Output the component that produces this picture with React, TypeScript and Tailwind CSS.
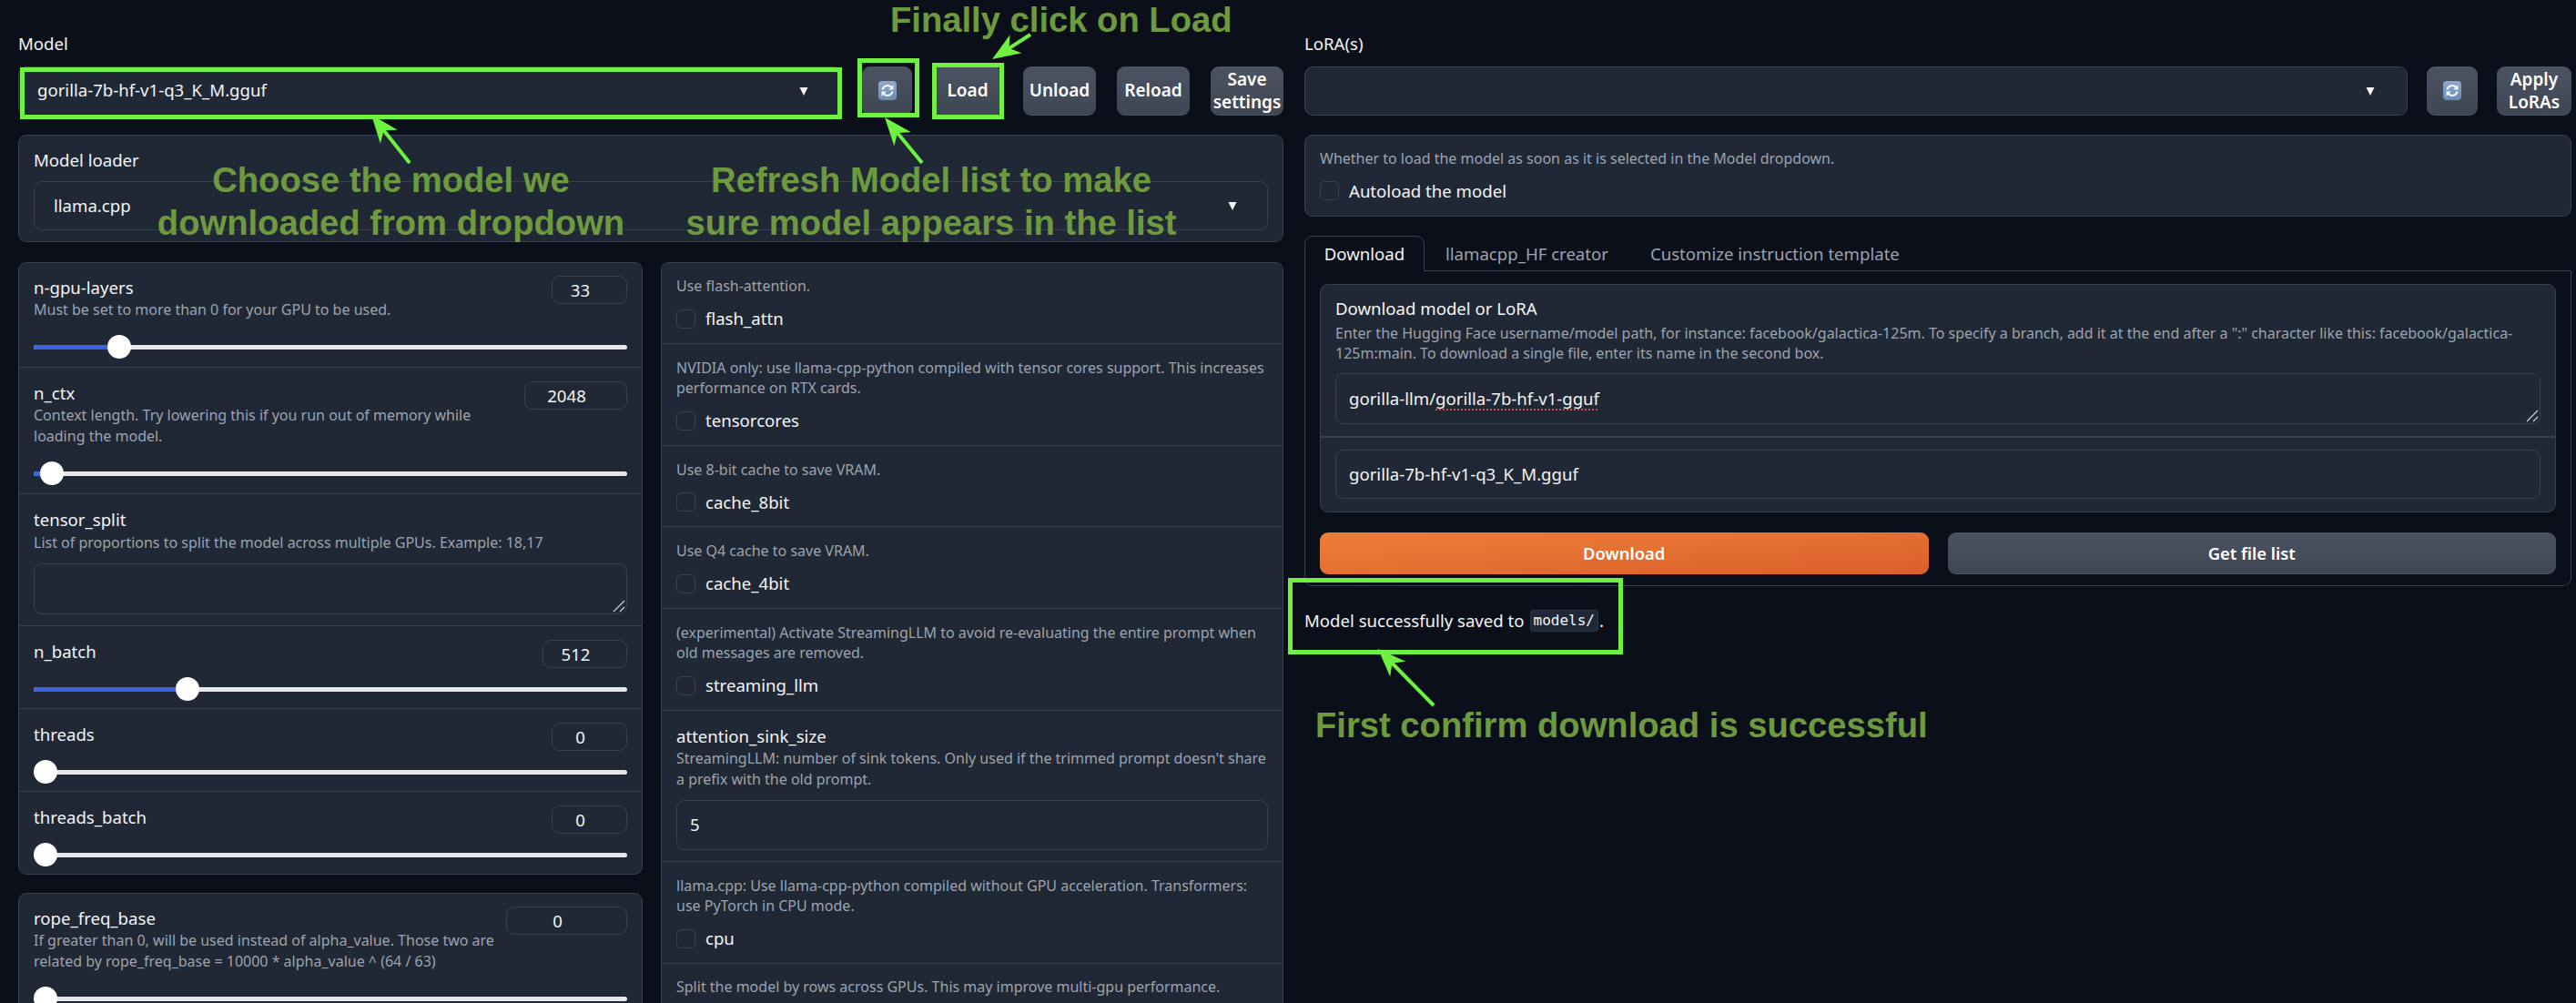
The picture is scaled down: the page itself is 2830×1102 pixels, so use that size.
import React from 'react';

const panel = 'rounded-[9px] border border-[#374151] bg-[#212835]';
const btn =
  'flex h-[54px] shrink-0 items-center justify-center rounded-[9px] border-b border-[#4b5563] bg-gradient-to-b from-[#4b5261] to-[#3f4654] text-center text-[19px] leading-[25px] font-semibold text-white';

const Caret: React.FC = () => (
  <svg width="12" height="12" viewBox="0 0 12 12" className="shrink-0">
    <polygon points="1.5,2 10.5,2 6,11" fill="#f3f4f6" />
  </svg>
);

const RefreshIcon: React.FC = () => (
  <svg width="20" height="21" viewBox="0 0 20 21">
    <defs>
      <linearGradient id="refreshFill" x1="0" y1="0" x2="0" y2="1">
        <stop offset="0" stopColor="#8fa9c9" />
        <stop offset="1" stopColor="#6d8cb3" />
      </linearGradient>
    </defs>
    <rect x="0" y="0" width="20" height="21" rx="4" fill="url(#refreshFill)" />
    <path d="M4.5 9.5 A5.6 5.6 0 0 1 14.2 7" fill="none" stroke="#f4f6f9" strokeWidth="2" />
    <polygon points="16.5,4 16.5,9.5 11.2,9.5" fill="#f4f6f9" />
    <path d="M15.5 11.5 A5.6 5.6 0 0 1 5.8 14" fill="none" stroke="#f4f6f9" strokeWidth="2" />
    <polygon points="3.5,17 3.5,11.5 8.8,11.5" fill="#f4f6f9" />
  </svg>
);

const ResizeHandle: React.FC = () => (
  <svg width="14" height="14" viewBox="0 0 14 14" className="absolute right-[1px] bottom-[1px]">
    <path d="M1 13 L13 1 M8 13 L13 8" stroke="#c9ccd2" strokeWidth="1.3" />
  </svg>
);

const Slider: React.FC<{ left: number; gap: string }> = ({ left, gap }) => (
  <div className={`relative flex h-[26px] items-center ${gap}`}>
    <div className="h-[5px] w-full rounded-full bg-[#e5e7eb]" />
    <div className="absolute left-0 h-[5px] rounded-l-full bg-[#3b63e4]" style={{ width: left + 4 }} />
    <div className="absolute h-[26px] w-[26px] rounded-full bg-white" style={{ left }} />
  </div>
);

interface SliderRowProps {
  title: string;
  info?: string[];
  value: string;
  inputWidth: string;
  left: number;
  first?: boolean;
  last?: boolean;
}

const SliderRow: React.FC<SliderRowProps> = ({ title, info, value, inputWidth, left, first, last }) => (
  <div
    className={`px-[16px] ${first ? 'pt-[14px]' : 'pt-[15px]'} ${info ? 'pb-[9px]' : 'pb-[8px]'} ${
      last ? '' : 'border-b border-[#374151]'
    }`}
  >
    <div className="flex justify-between">
      <div>
        <div className="text-[18.6px] leading-[26px] text-[#f3f4f6]">{title}</div>
        {info?.map((line) => (
          <div key={line} className="text-[16px] leading-[23px] whitespace-nowrap text-[#9ca3af]">
            {line}
          </div>
        ))}
      </div>
      <div
        className={`${inputWidth} flex h-[31px] shrink-0 items-center justify-center rounded-[9px] border border-[#374151] pr-[20px] text-[18.6px] text-[#f3f4f6]`}
      >
        {value}
      </div>
    </div>
    <Slider left={left} gap={info ? 'mt-[16px]' : 'mt-[10px]'} />
  </div>
);

const CheckRow: React.FC<{ info: string[]; label: string; first?: boolean; last?: boolean }> = ({
  info,
  label,
  first,
  last,
}) => (
  <div className={`px-[16px] ${first ? 'pt-[14px]' : 'pt-[15px]'} pb-[16px] ${last ? '' : 'border-b border-[#374151]'}`}>
    {info.map((line) => (
      <div key={line} className="text-[16px] leading-[22.5px] whitespace-nowrap text-[#9ca3af]">
        {line}
      </div>
    ))}
    <div className="mt-[14px] flex h-[21px] items-center gap-[11px]">
      <div className="h-[21px] w-[21px] rounded-[5px] border border-[#374151]" />
      <span className="text-[18.6px] text-[#f3f4f6]">{label}</span>
    </div>
  </div>
);

const Arrow: React.FC<{ x1: number; y1: number; x2: number; y2: number }> = ({ x1, y1, x2, y2 }) => {
  // x1,y1 is the tail, x2,y2 the tip
  const len = Math.hypot(x2 - x1, y2 - y1);
  const ux = (x2 - x1) / len;
  const uy = (y2 - y1) / len;
  const at = (back: number, side: number) => `${x2 - ux * back - uy * side},${y2 - uy * back + ux * side}`;
  return (
    <g fill="#6ff23f" stroke="#6ff23f">
      <line x1={x1} y1={y1} x2={x2 - ux * 20} y2={y2 - uy * 20} strokeWidth="4" />
      <polygon points={`${at(0, 0)} ${at(31, 12)} ${at(22, 0)} ${at(31, -12)}`} strokeWidth="0" />
    </g>
  );
};

const Note: React.FC<{ className: string; children: React.ReactNode }> = ({ className, children }) => (
  <div
    className={`absolute whitespace-nowrap font-['Liberation_Sans',Arial,sans-serif] text-[38.2px] leading-[44px] font-bold text-[#6e9a3f] ${className}`}
  >
    {children}
  </div>
);

const Overlay: React.FC = () => (
  <>
    <div className="absolute top-[74px] left-[22px] h-[57px] w-[903px] border-[5px] border-[#6ff23f]" />
    <div className="absolute top-[64px] left-[942px] h-[65px] w-[68px] border-[5px] border-[#6ff23f]" />
    <div className="absolute top-[69px] left-[1024px] h-[62px] w-[79px] border-[5px] border-[#6ff23f]" />
    <div className="absolute top-[635px] left-[1415px] h-[84px] w-[368px] border-[5px] border-[#6ff23f]" />
    <svg width="2830" height="1102" className="absolute top-0 left-0">
      <Arrow x1={450} y1={179} x2={408} y2={126} />
      <Arrow x1={1013} y1={179} x2={972} y2={129} />
      <Arrow x1={1132} y1={38} x2={1090} y2={65} />
      <Arrow x1={1575} y1={775} x2={1514} y2={713} />
    </svg>
    <Note className="top-[0px] left-[978px]">Finally click on Load</Note>
    <Note className="top-[176px] left-[172px] w-[515px] text-center">Choose the model we</Note>
    <Note className="top-[223px] left-[172px] w-[515px] text-center">downloaded from dropdown</Note>
    <Note className="top-[176px] left-[752px] w-[542px] text-center">Refresh Model list to make</Note>
    <Note className="top-[223px] left-[752px] w-[542px] text-center">sure model appears in the list</Note>
    <Note className="top-[775px] left-[1445px]">First confirm download is successful</Note>
  </>
);

const App: React.FC = () => (
  <div className="relative h-[1102px] w-[2830px] overflow-hidden bg-[#0b0f19] font-['Noto_Sans',sans-serif]">
    <div className="flex gap-[23px] pr-[5px] pl-[20px]">
      {/* left side */}
      <div className="w-[1390px] shrink-0">
        <div className="pt-[36px] pb-[13px] text-[18.6px] leading-[24px] text-[#f3f4f6]">Model</div>
        <div className="flex gap-[23px]">
          <div className={`${panel} flex h-[54px] flex-1 items-center justify-between pr-[34px] pl-[20px]`}>
            <span className="-mt-[2px] text-[18.6px] text-[#f3f4f6]">gorilla-7b-hf-v1-q3_K_M.gguf</span>
            <Caret />
          </div>
          <div className={`${btn} w-[55px]`}>
            <RefreshIcon />
          </div>
          <div className={`${btn} w-[76px]`}>Load</div>
          <div className={`${btn} w-[80px]`}>Unload</div>
          <div className={`${btn} w-[80px]`}>Reload</div>
          <div className={`${btn} w-[80px]`}>
            Save
            <br />
            settings
          </div>
        </div>

        <div className={`${panel} mt-[21px] h-[118px] px-[16px] pt-[14px]`}>
          <div className="text-[18.6px] leading-[26px] text-[#f3f4f6]">Model loader</div>
          <div className="mt-[10px] flex h-[54px] items-center justify-between rounded-[9px] border border-[#374151] pr-[32px] pl-[21px]">
            <span className="text-[18.6px] text-[#f3f4f6]">llama.cpp</span>
            <Caret />
          </div>
        </div>

        <div className="mt-[22px] grid grid-cols-[686px_684px] gap-[20px]">
          <div className="flex flex-col gap-[20px]">
            <div className={panel}>
              <SliderRow
                first
                title="n-gpu-layers"
                info={['Must be set to more than 0 for your GPU to be used.']}
                value="33"
                inputWidth="w-[83px]"
                left={81}
              />
              <SliderRow
                title="n_ctx"
                info={['Context length. Try lowering this if you run out of memory while', 'loading the model.']}
                value="2048"
                inputWidth="w-[113px]"
                left={7}
              />
              <div className="border-b border-[#374151] px-[16px] pt-[15px] pb-[12px]">
                <div className="text-[18.6px] leading-[26px] text-[#f3f4f6]">tensor_split</div>
                <div className="text-[16px] leading-[25px] text-[#9ca3af]">
                  List of proportions to split the model across multiple GPUs. Example: 18,17
                </div>
                <div className="relative mt-[10px] h-[56px] rounded-[9px] border border-[#374151]">
                  <ResizeHandle />
                </div>
              </div>
              <SliderRow title="n_batch" value="512" inputWidth="w-[93px]" left={156} />
              <SliderRow title="threads" value="0" inputWidth="w-[83px]" left={0} />
              <SliderRow title="threads_batch" value="0" inputWidth="w-[83px]" left={0} last />
            </div>
            <div className={panel}>
              <SliderRow
                first
                title="rope_freq_base"
                info={[
                  'If greater than 0, will be used instead of alpha_value. Those two are',
                  'related by rope_freq_base = 10000 * alpha_value ^ (64 / 63)',
                ]}
                value="0"
                inputWidth="w-[133px]"
                left={0}
                last
              />
            </div>
          </div>

          <div className={`${panel} h-[900px]`}>
            <CheckRow first info={['Use flash-attention.']} label="flash_attn" />
            <CheckRow
              info={['NVIDIA only: use llama-cpp-python compiled with tensor cores support. This increases', 'performance on RTX cards.']}
              label="tensorcores"
            />
            <CheckRow info={['Use 8-bit cache to save VRAM.']} label="cache_8bit" />
            <CheckRow info={['Use Q4 cache to save VRAM.']} label="cache_4bit" />
            <CheckRow
              info={['(experimental) Activate StreamingLLM to avoid re-evaluating the entire prompt when', 'old messages are removed.']}
              label="streaming_llm"
            />
            <div className="border-b border-[#374151] px-[16px] pt-[15px] pb-[12px]">
              <div className="text-[18.6px] leading-[26px] text-[#f3f4f6]">attention_sink_size</div>
              <div className="text-[16px] leading-[23px] whitespace-nowrap text-[#9ca3af]">
                StreamingLLM: number of sink tokens. Only used if the trimmed prompt doesn't share
              </div>
              <div className="text-[16px] leading-[23px] text-[#9ca3af]">a prefix with the old prompt.</div>
              <div className="mt-[11px] flex h-[55px] items-center rounded-[9px] border border-[#374151] pl-[14px] text-[18.6px] text-[#f3f4f6]">
                5
              </div>
            </div>
            <CheckRow
              info={['llama.cpp: Use llama-cpp-python compiled without GPU acceleration. Transformers:', 'use PyTorch in CPU mode.']}
              label="cpu"
            />
            <div className="px-[16px] pt-[14px] text-[16px] leading-[22px] whitespace-nowrap text-[#9ca3af]">
              Split the model by rows across GPUs. This may improve multi-gpu performance.
            </div>
          </div>
        </div>
      </div>

      {/* right side */}
      <div className="w-[1392px] shrink-0">
        <div className="pt-[36px] pb-[13px] text-[18.6px] leading-[24px] text-[#f3f4f6]">LoRA(s)</div>
        <div className="flex gap-[21px]">
          <div className={`${panel} flex h-[54px] flex-1 items-center justify-end pr-[34px]`}>
            <Caret />
          </div>
          <div className={`${btn} w-[56px]`}>
            <RefreshIcon />
          </div>
          <div className={`${btn} w-[82px]`}>
            Apply
            <br />
            LoRAs
          </div>
        </div>

        <div className={`${panel} mt-[21px] h-[90px] px-[16px] pt-[14px]`}>
          <div className="text-[16px] leading-[22px] text-[#9ca3af]">
            Whether to load the model as soon as it is selected in the Model dropdown.
          </div>
          <div className="mt-[14px] flex h-[21px] items-center gap-[11px]">
            <div className="h-[21px] w-[21px] rounded-[5px] border border-[#374151]" />
            <span className="text-[18.6px] text-[#f3f4f6]">Autoload the model</span>
          </div>
        </div>

        <div className="mt-[21px] flex h-[39px] items-center">
          <div className="relative z-10 flex h-[39px] w-[132px] items-center justify-center rounded-t-[9px] border border-b-0 border-[#374151] bg-[#0b0f19] text-[18.6px] text-[#f3f4f6]">
            Download
          </div>
          <span className="ml-[23px] text-[18.6px] text-[#9ca3af]">llamacpp_HF creator</span>
          <span className="ml-[46px] text-[18.6px] text-[#9ca3af]">Customize instruction template</span>
        </div>
        <div className="-mt-[1px] h-[347px] rounded-b-[9px] border border-[#374151] px-[16px] pt-[14px]">
          <div className={`${panel} h-[251px] overflow-hidden`}>
            <div className="px-[16px] pt-[13px]">
              <div className="text-[18.6px] leading-[26px] text-[#f3f4f6]">Download model or LoRA</div>
              <div className="mt-[3px] text-[16px] leading-[22px] text-[#9ca3af]">
                Enter the Hugging Face username/model path, for instance: facebook/galactica-125m. To specify a branch, add it at the end after a ":" character like this: facebook/galactica-125m:main. To download a single file, enter its name in the second box.
              </div>
              <div className="relative mt-[11px] flex h-[56px] items-center rounded-[9px] border border-[#374151] pl-[14px] text-[18.6px] text-[#f3f4f6]">
                <span>
                  gorilla-llm/
                  <span className="underline decoration-[#c8504a] decoration-dotted decoration-2 underline-offset-4">
                    gorilla-7b-hf-v1-gguf
                  </span>
                </span>
                <ResizeHandle />
              </div>
            </div>
            <div className="mt-[13px] border-t-[2px] border-[#374151] px-[16px] pt-[13px]">
              <div className="flex h-[54px] items-center rounded-[9px] border border-[#374151] pl-[14px] text-[18.6px] text-[#f3f4f6]">
                gorilla-7b-hf-v1-q3_K_M.gguf
              </div>
            </div>
          </div>
          <div className="mt-[22px] grid grid-cols-2 gap-[21px]">
            <div className="flex h-[46px] items-center justify-center rounded-[9px] bg-gradient-to-br from-[#ed7f38] to-[#db5f2b] text-[18.4px] font-semibold text-white">
              Download
            </div>
            <div className="flex h-[46px] items-center justify-center rounded-[9px] border-b border-[#4b5563] bg-gradient-to-b from-[#4b5261] to-[#3f4654] text-[18.4px] font-semibold text-white">
              Get file list
            </div>
          </div>
        </div>

        <div className="mt-[22px] flex h-[32px] items-center text-[18.6px] text-[#f3f4f6]">
          Model successfully saved to
          <code className="mr-[1px] ml-[6px] flex h-[24px] items-center rounded-[3px] border border-[#2f3744] bg-[#212835] px-[3px] font-['DejaVu_Sans_Mono',monospace] text-[16px] leading-none">
            models/
          </code>
          .
        </div>
      </div>
    </div>
    <Overlay />
  </div>
);

export default App;
